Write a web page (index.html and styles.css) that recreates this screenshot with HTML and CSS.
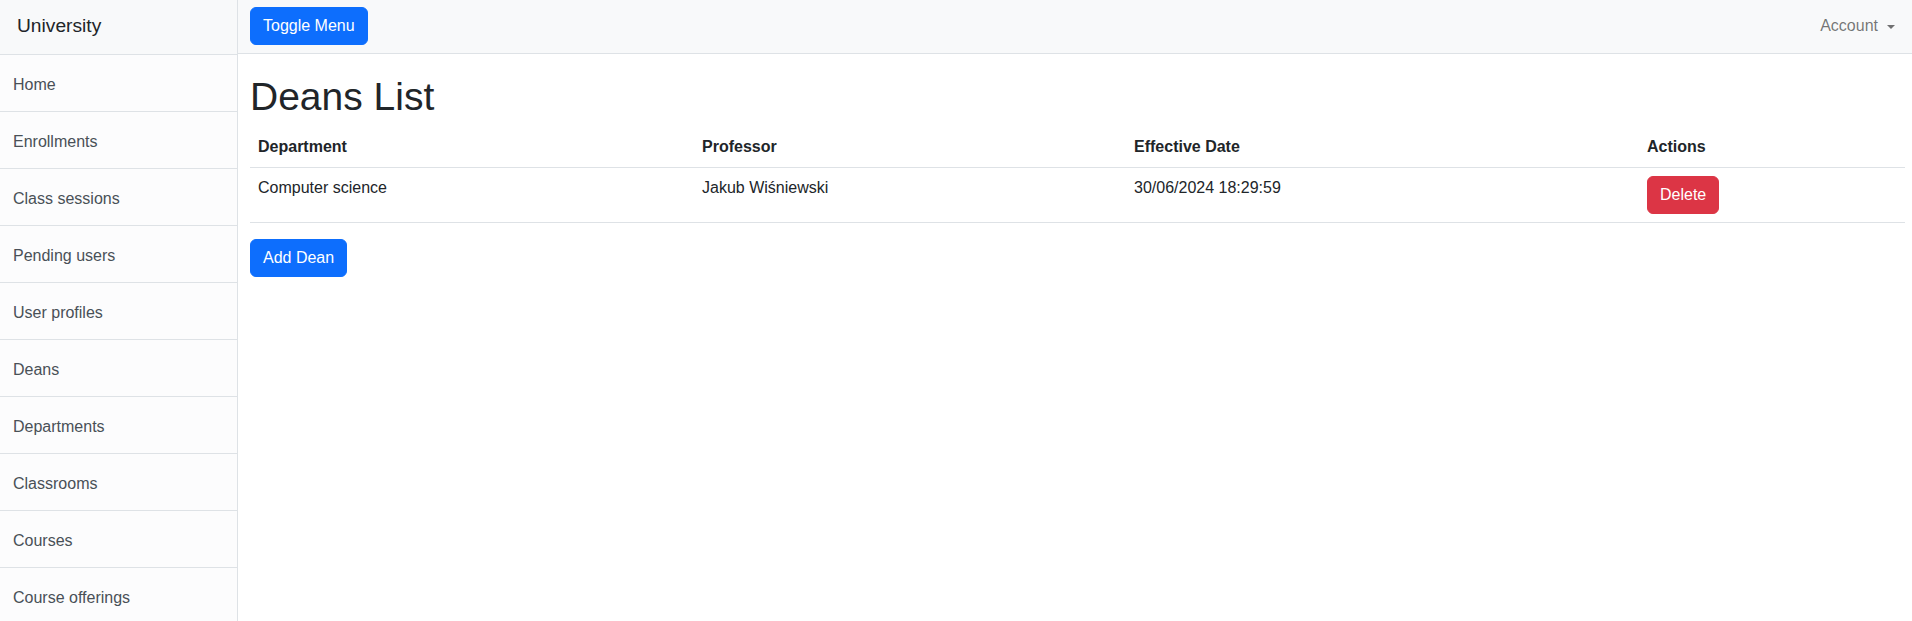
FILE: index.html
```html
<!DOCTYPE html>
<html lang="en">
<head>
<meta charset="utf-8">
<title>Deans List</title>
<link rel="stylesheet" href="styles.css">
</head>
<body>
<div class="wrapper">
  <aside class="sidebar">
    <div class="sidebar-heading">University</div>
    <nav class="side-list">
      <a class="side-item" href="#">Home</a>
      <a class="side-item" href="#">Enrollments</a>
      <a class="side-item" href="#">Class sessions</a>
      <a class="side-item" href="#">Pending users</a>
      <a class="side-item" href="#">User profiles</a>
      <a class="side-item" href="#">Deans</a>
      <a class="side-item" href="#">Departments</a>
      <a class="side-item" href="#">Classrooms</a>
      <a class="side-item" href="#">Courses</a>
      <a class="side-item" href="#">Course offerings</a>
    </nav>
  </aside>
  <div class="page">
    <nav class="topbar">
      <button class="btn btn-primary" type="button">Toggle Menu</button>
      <a class="account" href="#">Account<span class="caret"></span></a>
    </nav>
    <main class="content">
      <h1 class="title">Deans List</h1>
      <table class="table">
        <colgroup>
          <col class="col-dept">
          <col class="col-prof">
          <col class="col-date">
          <col>
        </colgroup>
        <thead>
          <tr>
            <th>Department</th>
            <th>Professor</th>
            <th>Effective Date</th>
            <th>Actions</th>
          </tr>
        </thead>
        <tbody>
          <tr>
            <td>Computer science</td>
            <td>Jakub Wiśniewski</td>
            <td>30/06/2024 18:29:59</td>
            <td><button class="btn btn-danger" type="button">Delete</button></td>
          </tr>
        </tbody>
      </table>
      <button class="btn btn-primary" type="button">Add Dean</button>
    </main>
  </div>
</div>
</body>
</html>
```

FILE: styles.css
```css
* {
  box-sizing: border-box;
}

html, body {
  margin: 0;
  padding: 0;
}

body {
  font-family: "Liberation Sans", Arial, sans-serif;
  font-size: 16px;
  line-height: 1.5;
  color: #212529;
  background: #fff;
}

.wrapper {
  display: flex;
  height: 100vh;
  overflow: hidden;
}

.sidebar {
  flex: 0 0 238px;
  width: 238px;
  border-right: 1px solid #dee2e6;
  background: #fff;
}

.sidebar-heading {
  height: 55px;
  padding: 12px 17px;
  font-size: 19.2px;
  line-height: 28.8px;
  background: #f8f9fa;
  border-bottom: 1px solid #dee2e6;
  color: #212529;
}

.side-list {
  display: flex;
  flex-direction: column;
}

.side-item {
  display: block;
  padding: 18px 13px 14px;
  line-height: 24px;
  color: #495057;
  background: #fcfcfd;
  text-decoration: none;
  border-bottom: 1px solid #dee2e6;
}

.page {
  flex: 1 1 auto;
  min-width: 0;
  display: flex;
  flex-direction: column;
}

.topbar {
  height: 54px;
  display: flex;
  align-items: center;
  justify-content: space-between;
  padding: 0 17px 1px 12px;
  background: #f8f9fa;
  border-bottom: 1px solid #dee2e6;
}

.account {
  display: flex;
  align-items: center;
  color: rgba(0, 0, 0, 0.55);
  text-decoration: none;
  line-height: 24px;
}

.caret {
  display: inline-block;
  margin-left: 9px;
  width: 0;
  height: 0;
  border-top: 4.5px solid rgba(0, 0, 0, 0.55);
  border-left: 4px solid transparent;
  border-right: 4px solid transparent;
  margin-top: 1px;
}

.btn {
  display: inline-block;
  padding: 6px 12px;
  font-family: inherit;
  font-size: 16px;
  line-height: 24px;
  border: 1px solid transparent;
  border-radius: 6px;
  color: #fff;
  cursor: pointer;
}

.btn-primary {
  background: #0d6efd;
  border-color: #0d6efd;
}

.btn-danger {
  background: #dc3545;
  border-color: #dc3545;
}

.content {
  padding: 0 7px 0 12px;
}

.title {
  margin: 20px 0 7px;
  font-size: 39px;
  line-height: 1.17;
  font-weight: 500;
  color: #212529;
}

.table {
  width: 100%;
  table-layout: fixed;
  border-collapse: collapse;
  margin-bottom: 16px;
}

.col-dept {
  width: 444px;
}

.col-prof {
  width: 432px;
}

.col-date {
  width: 513px;
}

.table th,
.table td {
  padding: 8px;
  text-align: left;
  vertical-align: top;
  border-bottom: 1px solid #dee2e6;
  line-height: 24px;
}

.table th {
  font-weight: 700;
  padding-top: 8px;
  padding-bottom: 8px;
}

.table td {
  padding-top: 8px;
  padding-bottom: 8px;
}
```
